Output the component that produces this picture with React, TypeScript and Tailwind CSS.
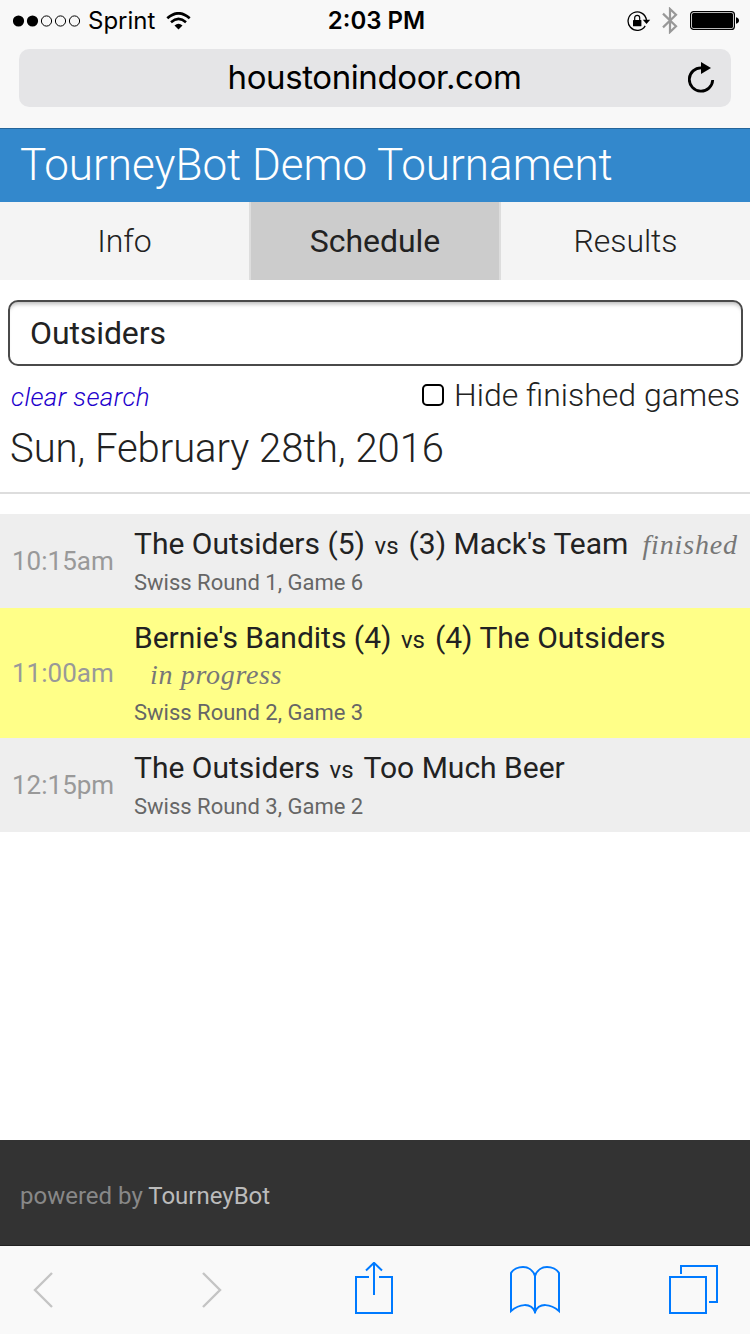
import React from 'react';

type Game = {
  time: string;
  home: string;
  away: string;
  status?: 'finished' | 'in progress';
  round: string;
};

const games: Game[] = [
  { time: '10:15am', home: 'The Outsiders (5)', away: "(3) Mack's Team", status: 'finished', round: 'Swiss Round 1, Game 6' },
  { time: '11:00am', home: "Bernie's Bandits (4)", away: '(4) The Outsiders', status: 'in progress', round: 'Swiss Round 2, Game 3' },
  { time: '12:15pm', home: 'The Outsiders', away: 'Too Much Beer', round: 'Swiss Round 3, Game 2' },
];

function StatusBar() {
  return (
    <div className="grid h-[41px] grid-cols-[1fr_auto_1fr] items-center pr-[11px] pl-[13px]">
      <div className="flex items-center">
        <svg className="h-3 w-[68px]" viewBox="0 0 68 12" fill="none" stroke="#000">
          <circle cx="5.5" cy="6" r="5.6" fill="#000" stroke="none" />
          <circle cx="19.5" cy="6" r="5.6" fill="#000" stroke="none" />
          <circle cx="33.5" cy="6" r="5.1" />
          <circle cx="47.5" cy="6" r="5.1" />
          <circle cx="61.5" cy="6" r="5.1" />
        </svg>
        <span className="ml-[7px] w-[67px] text-2xl leading-[41px] whitespace-nowrap">Sprint</span>
        <svg className="ml-[11px] h-[18px] w-[25px]" viewBox="0 0 25 18" fill="none" stroke="#000">
          <path d="M1.3 6.3Q12.5 -3.7 23.7 6.3" strokeWidth="2.7" />
          <path d="M5 10.2Q12.5 3.7 20 10.2" strokeWidth="2.6" />
          <path d="M8.5 13.6Q12.5 10 16.5 13.6L12.5 17.6Z" fill="#000" stroke="none" />
        </svg>
      </div>
      <div className="pl-px text-2xl leading-[41px] font-semibold">2:03 PM</div>
      <div className="flex items-center justify-end">
        <svg className="h-5 w-6" viewBox="0 0 24 20" fill="none" stroke="#000">
          <path d="M18.2 14.8A9.2 9.2 0 1 1 19.4 9" strokeWidth="1.3" />
          <path d="M15.800 8.800H23.2L19.5 13Z" fill="#000" stroke="none" />
          <rect x="6" y="9" width="8.4" height="6.2" rx="0.5" fill="#000" stroke="none" />
          <path d="M7.7 9.4V6.8a2.5 2.5 0 0 1 5 0V9.4" strokeWidth="1.2" />
        </svg>
        <svg className="ml-[11px] h-[27px] w-4" viewBox="0 0 16 27" fill="none" stroke="#989898" strokeWidth="2.2">
          <path d="M1 6.6L14 19.3L8 25V2L14 7.7L1 20.4" />
        </svg>
        <svg className="ml-3 h-[19px] w-[49px]" viewBox="0 0 49 19">
          <rect x="0.6" y="0.6" width="43.8" height="17.8" rx="3" fill="none" stroke="#000" strokeWidth="1.2" />
          <rect x="2" y="2" width="41" height="15" rx="1.5" />
          <path d="M46 6.2Q49 7 49 9.5T46 12.8Z" />
        </svg>
      </div>
    </div>
  );
}

function AddressBar() {
  return (
    <div className="mx-[19px] mt-2 flex h-[58px] items-start rounded-[10px] bg-[#e5e5e7] pr-4 pl-[42px]">
      <div className="flex-1 text-center text-[33px] leading-[56px] tracking-[-0.4px]">houstonindoor.com</div>
      <svg className="mt-3 h-[32px] w-[27px]" viewBox="0.5 0 27 32" fill="none">
        <path d="M25.2 19A11.7 11.7 0 1 1 14 6.8" stroke="#000" strokeWidth="2.8" />
        <path d="M13.5 1L23.5 7L13.5 13Z" fill="#000" />
      </svg>
    </div>
  );
}

function Tabs() {
  return (
    <nav className="flex h-[78px] text-center text-[32px] leading-[78px] font-light tracking-[-0.05px]">
      <div className="w-[251px] border-r-2 border-[#ddd] bg-[#f4f4f4]">Info</div>
      <div className="w-[250px] border-r-2 border-[#ddd] bg-[#ccc] font-[450]">Schedule</div>
      <div className="flex-1 bg-[#f4f4f4]">Results</div>
    </nav>
  );
}

function GameRow({ game }: { game: Game }) {
  const live = game.status === 'in progress';
  return (
    <div className={`flex items-center ${live ? 'h-[130px] bg-[#ffff88]' : 'h-[94px] bg-[#eee]'}`}>
      <div className="w-[134px] pl-3 text-[26px] text-[#999]">{game.time}</div>
      <div className="flex-1 self-stretch pt-3 whitespace-nowrap">
        <div className="h-9 text-[30px] leading-9">
          {game.home}
          <span className="mr-[10px] ml-[9.5px] text-2xl leading-none">vs</span>
          {game.away}
          {game.status === 'finished' && (
            <em className="ml-[14px] font-['Liberation_Serif',serif] text-[28px] leading-none tracking-[0.85px] text-[#777]">
              finished
            </em>
          )}
        </div>
        {live && (
          <div className="h-9 text-[30px] leading-9">
            <em className="ml-4 font-['Liberation_Serif',serif] text-[28px] leading-none tracking-[0.68px] text-[#777]">
              in progress
            </em>
          </div>
        )}
        <div className="mt-[6px] text-[22px] leading-[30px] text-[#666]">{game.round}</div>
      </div>
    </div>
  );
}

function Toolbar() {
  return (
    <div className="flex h-[88px] items-start bg-[#f9f9f9] pt-4 pl-[33px]">
      <svg className="mt-[10px] h-9 w-5" viewBox="0 0 20 36" fill="none" stroke="#c4c4c4" strokeWidth="2.4">
        <path d="M19 1L2 18L19 35" />
      </svg>
      <svg className="mt-[10px] ml-[149px] h-9 w-5" viewBox="0 0 20 36" fill="none" stroke="#c4c4c4" strokeWidth="2.4">
        <path d="M1 1L18 18L1 35" />
      </svg>
      <svg className="ml-[133px] h-[52px] w-[38px]" viewBox="0 0 38 52" fill="none" stroke="#007aff" strokeWidth="2">
        <path d="M14 15H1V51H37V15H24" />
        <path d="M19 33V1M11 8.5L19 0.8L27 8.5" />
      </svg>
      <svg className="mt-1 ml-[117px] h-12 w-[50px]" viewBox="0 0 50 48" fill="none" stroke="#007aff" strokeWidth="2">
        <path d="M25 10V47M25 10C23 4 18 1 13 1S3 3.500 1 7V45C9 38 21 36 25 46C29 36 41 38 49 45V7C47 3.500 42 1 37 1S27 4 25 10" />
      </svg>
      <svg className="mt-[3px] ml-[109px] h-[50px] w-[50px]" viewBox="0 0 50 50" fill="none" stroke="#007aff" strokeWidth="2">
        <rect x="1" y="12" width="36" height="36" />
        <path d="M12 9V1H48V37H40" />
      </svg>
    </div>
  );
}

export default function App() {
  return (
    <div className="flex h-[1334px] w-[750px] flex-col overflow-hidden bg-white font-['Roboto',sans-serif] text-[#222]">
      <div className="h-32 shrink-0 bg-[#f8f8f8] font-['Inter',sans-serif] text-black">
        <StatusBar />
        <AddressBar />
      </div>
      <header className="h-[74px] border-t border-[#25659a] bg-[#3388cc] pl-5 text-[44px] leading-[73px] font-light text-white">
        TourneyBot Demo Tournament
      </header>
      <Tabs />
      <main className="flex flex-1 flex-col">
        <div className="mt-5 mr-[7px] ml-2 flex h-[66px] items-center rounded-[10px] border-2 border-[#4a4a4a] bg-white pl-5 text-[32px] tracking-[-0.1px] shadow-[inset_0_5px_4px_-3px_rgba(0,0,0,0.28)]">
          Outsiders
        </div>
        <div className="flex h-[58px] items-center justify-between pr-[10px] pl-[11px]">
          <span className="pt-1 text-[26px] font-light tracking-[0.38px] text-[#2200cc] italic">clear search</span>
          <label className="flex items-center text-[32px] font-light">
            <span className="mr-[10px] h-[22px] w-[22px] rounded-[5px] border-2 border-black" />
            Hide finished games
          </label>
        </div>
        <h2 className="h-[70px] border-b-2 border-[#ddd] pl-[10px] text-[40px] leading-[50px] font-light tracking-[-0.04px]">
          Sun, February 28th, 2016
        </h2>
        <div className="mt-5">
          {games.map((game) => (
            <GameRow key={game.time} game={game} />
          ))}
        </div>
      </main>
      <footer className="h-[106px] border-b border-[#222] bg-[#333] pt-1 pl-5 text-2xl leading-[104px] text-[#888]">
        powered by <span className="text-[#bbb]">TourneyBot</span>
      </footer>
      <Toolbar />
    </div>
  );
}
